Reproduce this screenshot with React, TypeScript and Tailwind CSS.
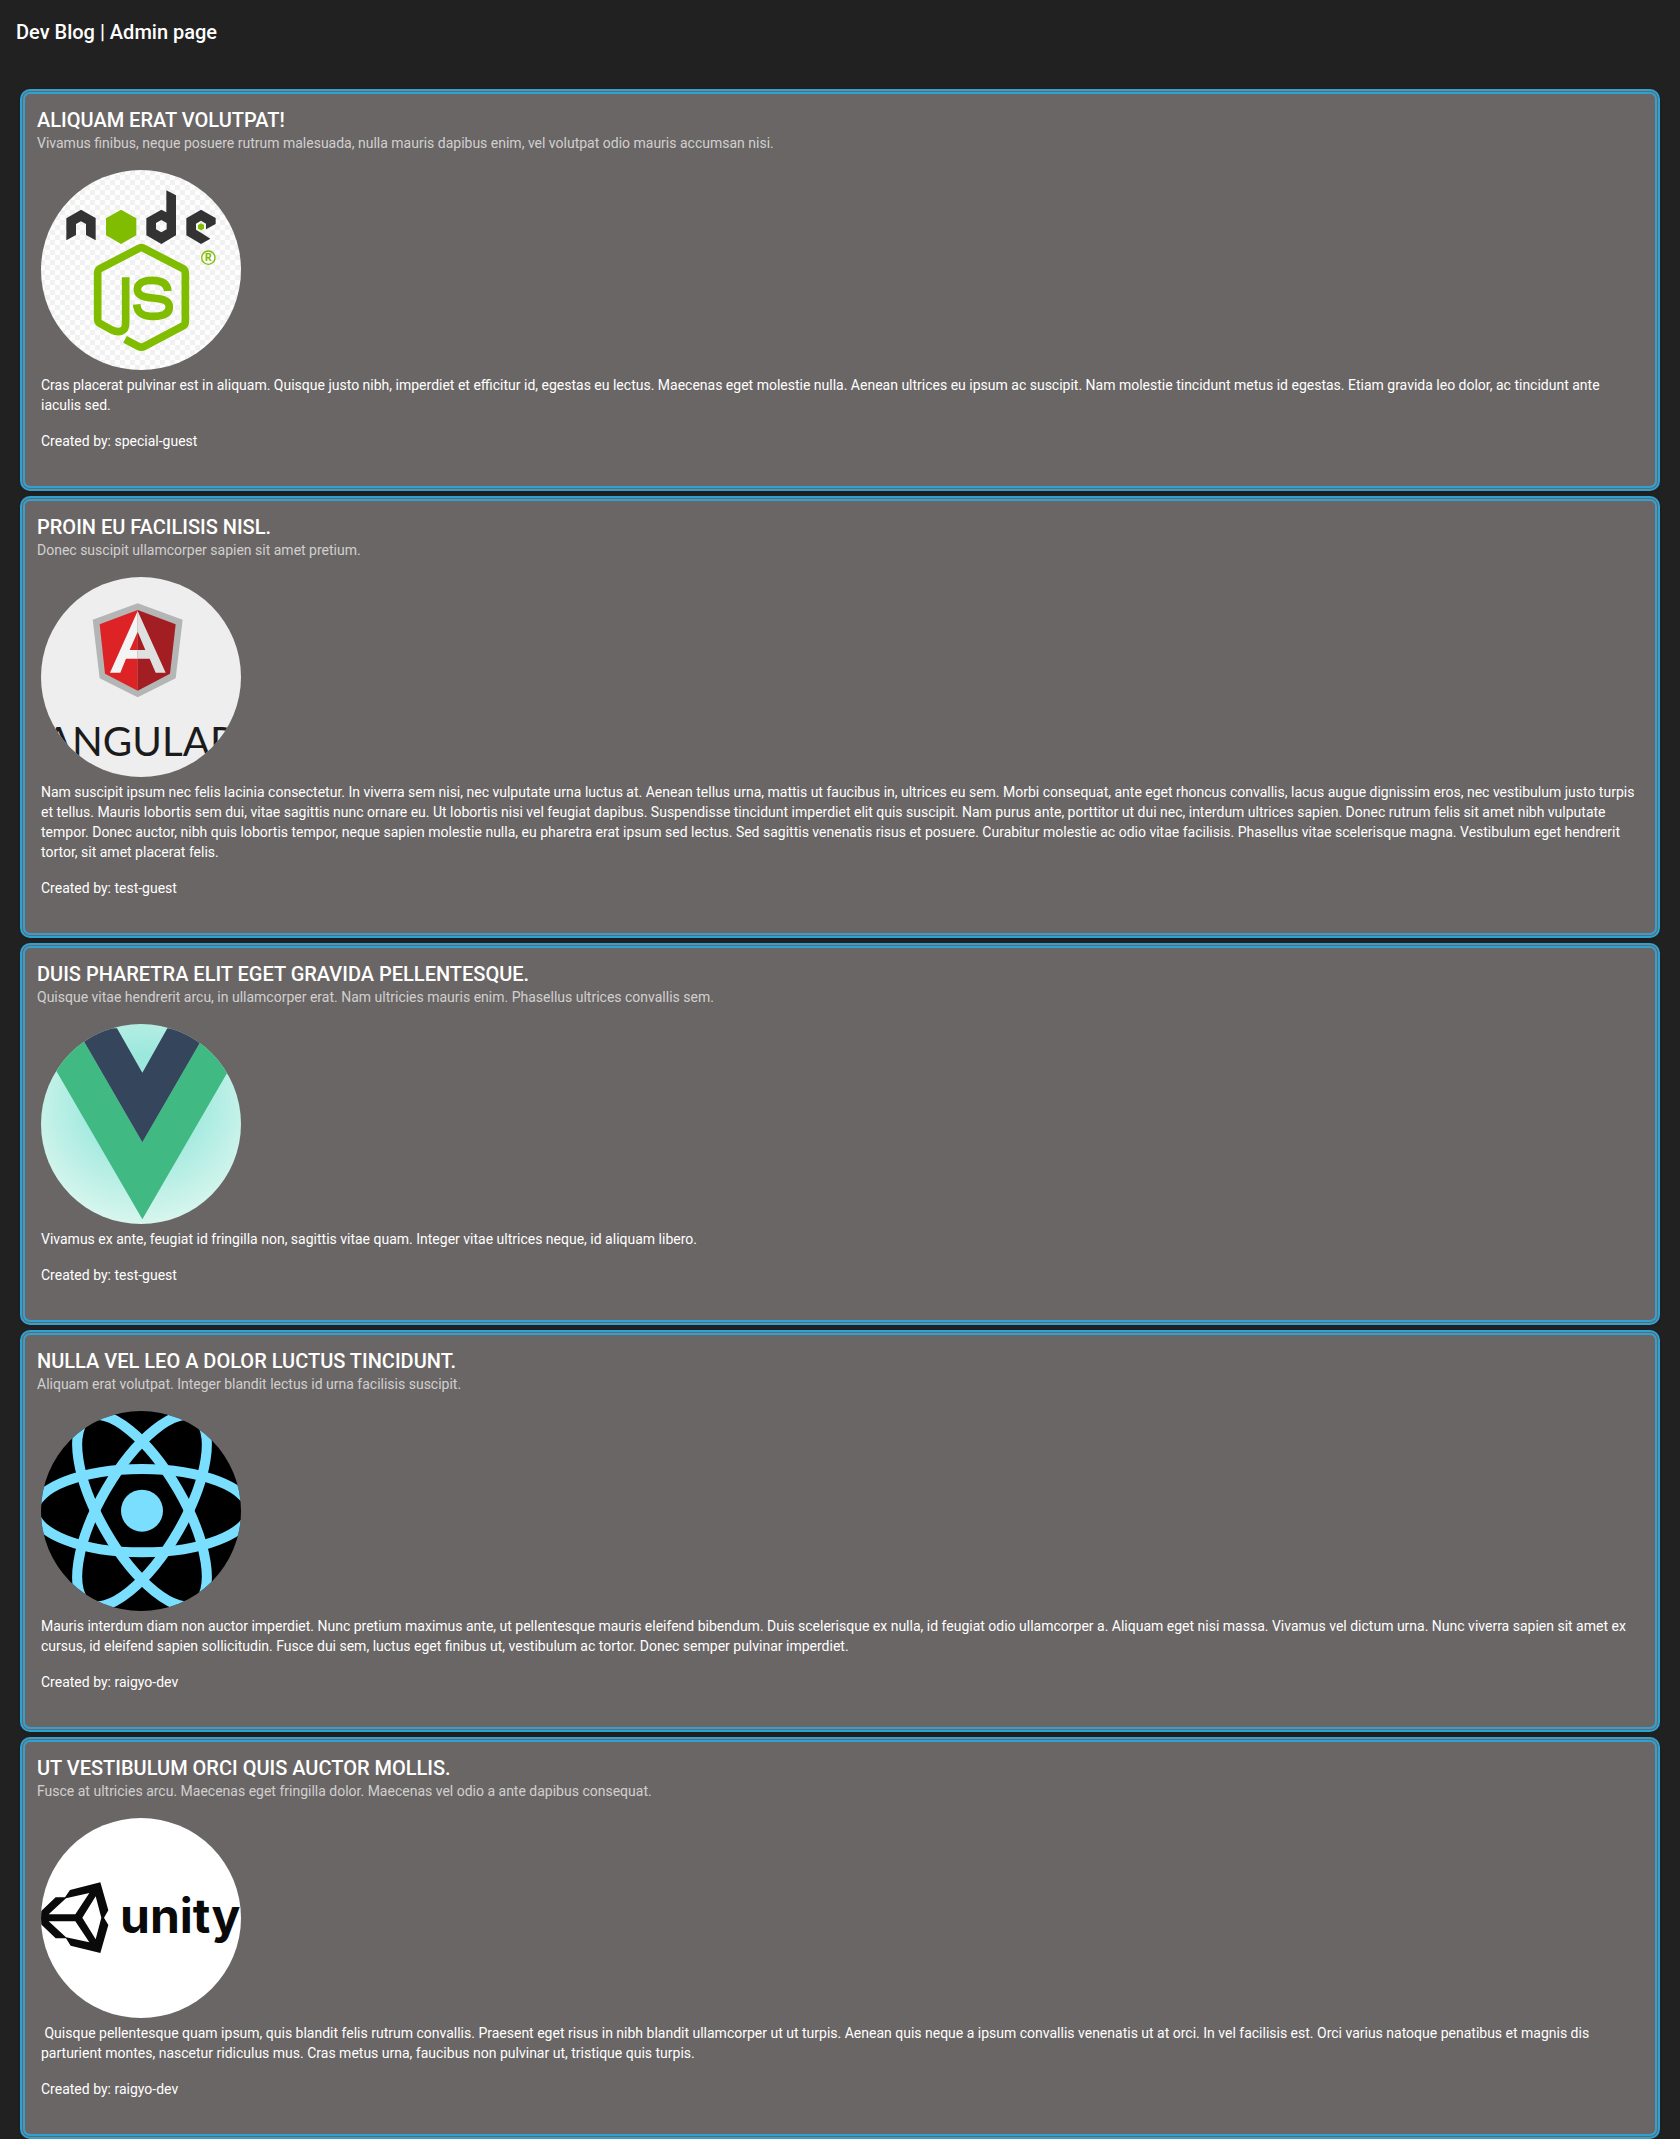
import type { ReactNode } from "react";

function Logo({ viewBox, label, children }: { viewBox: string; label: string; children: ReactNode }) {
  return (
    <svg viewBox={viewBox} role="img" aria-label={label} className="block size-[200px] rounded-full">
      {children}
    </svg>
  );
}

function NodeLogo() {
  return (
    <Logo viewBox="33 30 600 600" label="Node.js">
      <defs>
        <pattern id="checks" width="30" height="30" patternUnits="userSpaceOnUse">
          <rect width="30" height="30" fill="#fefefe" />
          <rect width="15" height="15" fill="#f1f1f1" />
          <rect x="15" y="15" width="15" height="15" fill="#f1f1f1" />
        </pattern>
      </defs>
      <rect x="33" y="30" width="600" height="600" fill="url(#checks)" />
      <g fill="#333333">
        <path d="M109 241V175L153 149L197 174V241L168 225V192L153 184L138 192V225Z" />
        <path
          fillRule="evenodd"
          d="M409 91L438 106V226L394 252L349 226V175L394 149L409 157ZM394 180L378 189V208L394 217L410 208V189Z"
        />
        <path d="M513 149L557 174V192L528 208V191L513 182L498 191V209L513 218L541 236L513 252L469 226V175Z" />
      </g>
      <g fill="#80bd01">
        <path d="M273 149L319 175V226L273 252L228 226V175Z" />
        <path d="M513 190L522 195V206L513 211L504 206V195Z" />
      </g>
      <g fill="none" stroke="#80bd01" strokeWidth="23">
        <path d="M287 352V490C287 517 265 519 246 510L209 490Q203 486 203 478V339Q203 330 210 326L325 266Q334 260 343 266L459 326Q466 330 466 339V486Q466 494 459 498L343 559Q334 564 325 559L285 538" />
        <path d="M414 393C412 371 395 361 367 361C338 361 322 371 322 388C322 407 340 411 368 414C400 417 418 421 418 441C418 460 402 469 370 469C337 469 322 459 320 433" />
        <circle cx="535" cy="293" r="20" strokeWidth="4" />
      </g>
      <text x="535" y="304" textAnchor="middle" fill="#80bd01" fontSize="31" fontWeight="700" fontFamily="Roboto, sans-serif">
        R
      </text>
    </Logo>
  );
}

function AngularLogo() {
  return (
    <Logo viewBox="33 36 600 600" label="Angular">
      <rect x="33" y="36" width="600" height="600" fill="#eeeeee" />
      <path d="M323 115L458 164L437 340L323 397L209 340L188 164Z" fill="#b3b6b5" />
      <path d="M323 135L209 178L225 326L323 377Z" fill="#dd2326" />
      <path d="M323 135L437 178L420 326L323 377Z" fill="#a31e22" />
      <path d="M323 138L240 323H271L288 281H323V255H299L323 200Z" fill="#f3f5f5" />
      <path d="M323 138L407 323H377L359 281H323V255H346L323 200Z" fill="#dfe1e1" />
      <text x="330" y="573" textAnchor="middle" fill="#1b1b1b" fontSize="121" fontFamily="Lato, sans-serif">
        ANGULAR
      </text>
    </Logo>
  );
}

function VueLogo() {
  return (
    <Logo viewBox="33 42 600 600" label="Vue">
      <defs>
        <radialGradient id="mint" cx="337" cy="270" r="390" gradientUnits="userSpaceOnUse">
          <stop offset="0.35" stopColor="#9ce8dd" />
          <stop offset="1" stopColor="#dcf7ef" />
        </radialGradient>
      </defs>
      <rect x="33" y="42" width="600" height="600" fill="url(#mint)" />
      <path d="M5 55H139L337 397L535 55H669L337 628Z" fill="#40b983" />
      <path d="M139 55H261L337 188L412 55H535L337 397Z" fill="#35465c" />
    </Logo>
  );
}

function ReactLogo() {
  return (
    <Logo viewBox="33 33 600 600" label="React">
      <rect x="33" y="33" width="600" height="600" fill="#000000" />
      <circle cx="336" cy="332" r="63" fill="#7adfff" />
      <g fill="none" stroke="#7adfff" strokeWidth="30">
        <ellipse cx="336" cy="332" rx="323" ry="125" />
        <ellipse cx="336" cy="332" rx="323" ry="125" transform="rotate(60 336 332)" />
        <ellipse cx="336" cy="332" rx="323" ry="125" transform="rotate(120 336 332)" />
      </g>
    </Logo>
  );
}

function UnityLogo() {
  return (
    <Logo viewBox="33 39 600 600" label="Unity">
      <rect x="33" y="39" width="600" height="600" fill="#ffffff" />
      <path
        d="M25 326L77 277H105L120 255L211 232L235 316L222 338L235 360L211 444L122 422L108 400H77L25 350Z"
        fill="#0a0a0a"
      />
      <path d="M56 328L108 280L178 264L136 328ZM56 349H136L178 412L108 397ZM157 338L197 274L214 338L197 403Z" fill="#ffffff" />
      <text x="270" y="383" fill="#0a0a0a" fontSize="144" fontWeight="700" fontFamily="Inter, sans-serif">
        unity
      </text>
    </Logo>
  );
}

const posts = [
  {
    title: "Aliquam erat volutpat!",
    subtitle:
      "Vivamus finibus, neque posuere rutrum malesuada, nulla mauris dapibus enim, vel volutpat odio mauris accumsan nisi.",
    logo: <NodeLogo />,
    body: "Cras placerat pulvinar est in aliquam. Quisque justo nibh, imperdiet et efficitur id, egestas eu lectus. Maecenas eget molestie nulla. Aenean ultrices eu ipsum ac suscipit. Nam molestie tincidunt metus id egestas. Etiam gravida leo dolor, ac tincidunt ante iaculis sed.",
    author: "special-guest",
  },
  {
    title: "Proin eu facilisis nisl.",
    subtitle: "Donec suscipit ullamcorper sapien sit amet pretium.",
    logo: <AngularLogo />,
    body: "Nam suscipit ipsum nec felis lacinia consectetur. In viverra sem nisi, nec vulputate urna luctus at. Aenean tellus urna, mattis ut faucibus in, ultrices eu sem. Morbi consequat, ante eget rhoncus convallis, lacus augue dignissim eros, nec vestibulum justo turpis et tellus. Mauris lobortis sem dui, vitae sagittis nunc ornare eu. Ut lobortis nisi vel feugiat dapibus. Suspendisse tincidunt imperdiet elit quis suscipit. Nam purus ante, porttitor ut dui nec, interdum ultrices sapien. Donec rutrum felis sit amet nibh vulputate tempor. Donec auctor, nibh quis lobortis tempor, neque sapien molestie nulla, eu pharetra erat ipsum sed lectus. Sed sagittis venenatis risus et posuere. Curabitur molestie ac odio vitae facilisis. Phasellus vitae scelerisque magna. Vestibulum eget hendrerit tortor, sit amet placerat felis.",
    author: "test-guest",
  },
  {
    title: "Duis pharetra elit eget gravida pellentesque.",
    subtitle:
      "Quisque vitae hendrerit arcu, in ullamcorper erat. Nam ultricies mauris enim. Phasellus ultrices convallis sem.",
    logo: <VueLogo />,
    body: "Vivamus ex ante, feugiat id fringilla non, sagittis vitae quam. Integer vitae ultrices neque, id aliquam libero.",
    author: "test-guest",
  },
  {
    title: "Nulla vel leo a dolor luctus tincidunt.",
    subtitle: "Aliquam erat volutpat. Integer blandit lectus id urna facilisis suscipit.",
    logo: <ReactLogo />,
    body: "Mauris interdum diam non auctor imperdiet. Nunc pretium maximus ante, ut pellentesque mauris eleifend bibendum. Duis scelerisque ex nulla, id feugiat odio ullamcorper a. Aliquam eget nisi massa. Vivamus vel dictum urna. Nunc viverra sapien sit amet ex cursus, id eleifend sapien sollicitudin. Fusce dui sem, luctus eget finibus ut, vestibulum ac tortor. Donec semper pulvinar imperdiet.",
    author: "raigyo-dev",
  },
  {
    title: "Ut vestibulum orci quis auctor mollis.",
    subtitle: "Fusce at ultricies arcu. Maecenas eget fringilla dolor. Maecenas vel odio a ante dapibus consequat.",
    logo: <UnityLogo />,
    body: "\u00a0Quisque pellentesque quam ipsum, quis blandit felis rutrum convallis. Praesent eget risus in nibh blandit ullamcorper ut ut turpis. Aenean quis neque a ipsum convallis venenatis ut at orci. In vel facilisis est. Orci varius natoque penatibus et magnis dis parturient montes, nascetur ridiculus mus. Cras metus urna, faucibus non pulvinar ut, tristique quis turpis.",
    author: "raigyo-dev",
  },
];

export default function App() {
  return (
    <div className="min-h-screen bg-[#212121] font-[Roboto,sans-serif] text-white">
      <header className="flex h-16 items-center px-4">
        <h1 className="text-xl font-medium">Dev Blog | Admin page</h1>
      </header>
      <main className="flex flex-col gap-[5px] px-5 pt-[25px]">
        {posts.map((post) => (
          <article
            key={post.title}
            className="rounded-[10px] border-[5px] border-double border-[#2fa1d3] bg-[#6a6665] px-4 pt-[14px] pb-[35px] text-sm shadow-sm"
          >
            <header className="-ml-1">
              <h2 className="text-xl leading-[25px] font-medium uppercase">{post.title}</h2>
              <p className="text-white/70">{post.subtitle}</p>
            </header>
            <div className="mt-[17px]">{post.logo}</div>
            <p className="mt-[5px]">{post.body}</p>
            <p className="mt-4">Created by: {post.author}</p>
          </article>
        ))}
      </main>
    </div>
  );
}
